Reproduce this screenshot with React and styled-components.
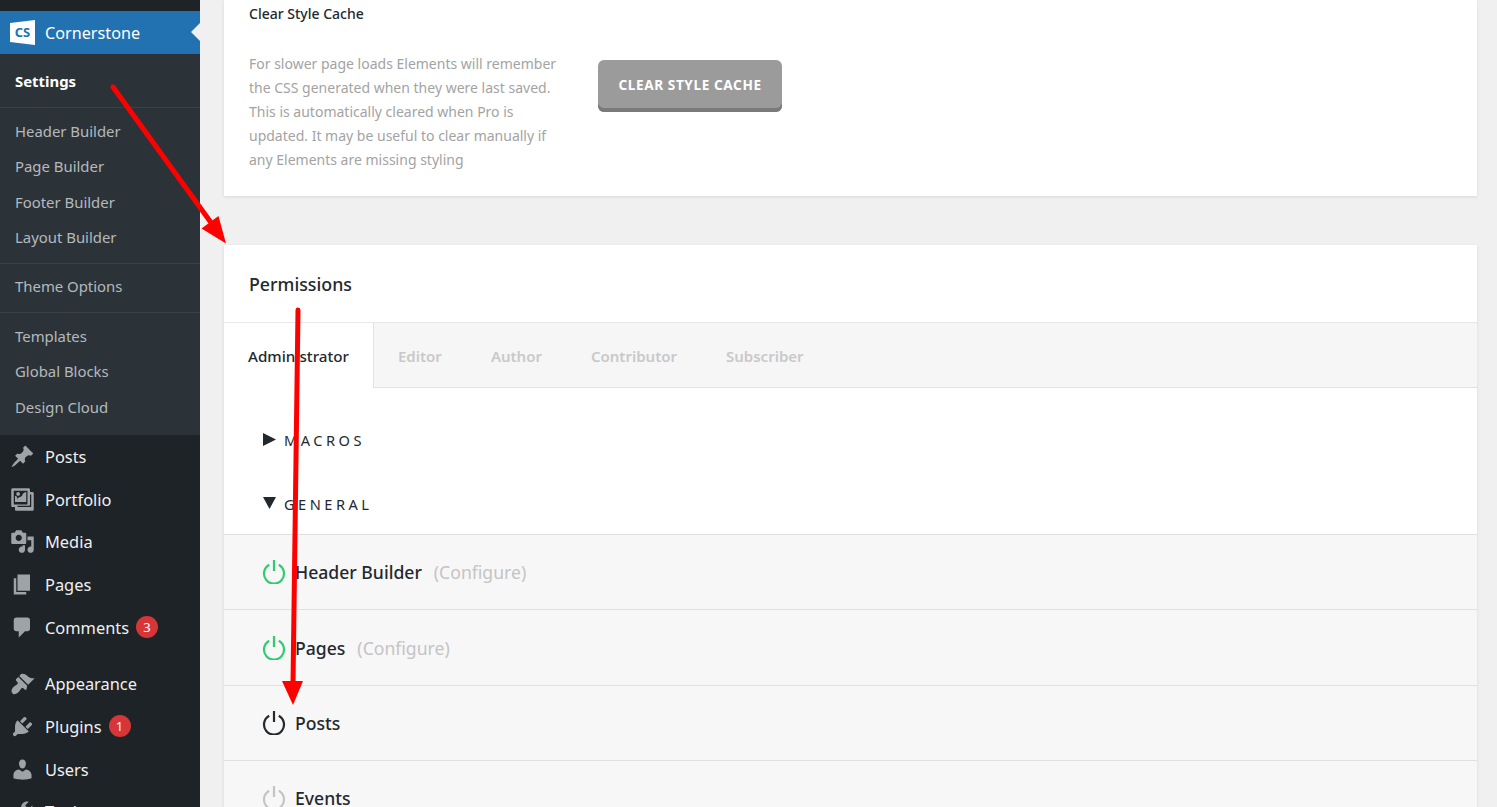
import React from "react";
import styled, { createGlobalStyle } from "styled-components";

const dashicons = {
  post: "M10.44 3.02l1.82-1.82 6.36 6.35-1.83 1.82c-1.05-.68-2.48-.57-3.41.36l-.75.75c-.92.93-1.04 2.35-.35 3.41l-1.83 1.82-2.41-2.41-2.8 2.79c-.42.42-3.38 2.71-3.8 2.29s1.86-3.39 2.28-3.81l2.79-2.79L4.1 9.36l1.83-1.82c1.05.69 2.48.57 3.4-.36l.75-.75c.93-.92 1.05-2.35.36-3.41z",
  gallery: "M16 4h1.96c.57 0 1.04.47 1.04 1.04v12.92c0 .57-.47 1.04-1.04 1.04H5.04C4.47 19 4 18.53 4 17.96V16H2.04C1.47 16 1 15.53 1 14.96V2.04C1 1.47 1.47 1 2.04 1h12.92c.57 0 1.04.47 1.04 1.04V4zM3 14h11V3H3v11zm5-8.5C8 4.67 7.33 4 6.5 4S5 4.67 5 5.5 5.67 7 6.5 7 8 6.33 8 5.5zm2 .5s1-2 3-2v8H4V7c2 0 2 3 2 3s.33-2 2-2 2-2 2-2zm7 7V6h-1v8c0 .55-.45 1-1 1H6v1h11z",
  media: "M13 11V4c0-.55-.45-1-1-1h-1.67L9 1H5L3.67 3H2c-.55 0-1 .45-1 1v7c0 .55.45 1 1 1h10c.55 0 1-.45 1-1zM7 4.5c1.38 0 2.5 1.12 2.5 2.5S8.38 9.5 7 9.5 4.5 8.38 4.5 7 5.62 4.5 7 4.5zM14 6h5v10.5c0 1.38-1.12 2.5-2.5 2.5S14 17.88 14 16.5s1.12-2.5 2.5-2.5c.17 0 .34.02.5.05V9h-3V6zm-4 8.05V13h2v3.5c0 1.38-1.12 2.5-2.5 2.5S7 17.88 7 16.5 8.12 14 9.5 14c.17 0 .34.02.5.05z",
  page: "M6 15V2h10v13H6zm-1 1h8v2H3V5h2v11z",
  comments: "M5 2h9c1.1 0 2 .9 2 2v7c0 1.1-.9 2-2 2h-2l-5 5v-5H5c-1.1 0-2-.9-2-2V4c0-1.1.9-2 2-2z",
  appearance: "M14.48 11.06L7.41 3.99l1.5-1.5c.5-.56 2.3-.47 3.51.32 1.21.8 1.43 1.28 2.91 2.1 1.18.64 2.45 1.26 4.45.85zm-.71.71L6.7 4.7 4.93 6.47c-.39.39-.39 1.02 0 1.41l1.06 1.06c.39.39.39 1.03 0 1.42-.6.6-1.43 1.11-2.21 1.69-.35.26-.7.53-1.01.84-1.34 1.34-1.78 3.19-1.47 3.9.2.46.46.85.77 1.16.24.24.5.43.77.55.71.31 2.56-.13 3.9-1.47.31-.31.58-.66.84-1.01.58-.78 1.09-1.61 1.69-2.21.39-.39 1.03-.39 1.42 0l1.06 1.06c.39.39 1.02.39 1.41 0z",
  plugins: "M13.11 4.36L9.87 7.6 8 5.73l3.24-3.24c.35-.34 1.05-.2 1.56.32.52.51.66 1.21.31 1.55zm-8 1.77l.91-1.12 9.01 9.01-1.19.84c-.71.71-2.63 1.16-3.82 1.16H6.14L4.9 17.26c-.59.59-1.54.59-2.12 0-.59-.58-.59-1.53 0-2.12l1.24-1.24v-3.88c0-1.13.4-3.19 1.09-3.89zm7.26 3.97l3.24-3.24c.34-.35 1.04-.21 1.55.31.52.51.66 1.21.31 1.55l-3.24 3.25z",
  users: "M10 9.25c-2.27 0-2.73-3.44-2.73-3.44C7 4.02 7.82 2 9.97 2c2.16 0 2.98 2.02 2.71 3.81 0 0-.41 3.44-2.68 3.44zm0 2.57L12.72 10c2.39 0 4.52 2.33 4.52 4.53v2.49s-3.65 1.13-7.24 1.13c-3.65 0-7.24-1.13-7.24-1.13v-2.49c0-2.25 1.94-4.48 4.47-4.48z",
  tools: "M16.68 9.77c-1.34 1.34-3.3 1.67-4.95.99l-5.41 6.52c-.99.99-2.59.99-3.58 0s-.99-2.59 0-3.58l6.52-5.41c-.68-1.65-.35-3.61.99-4.95 1.28-1.28 3.12-1.62 4.72-1.06l-2.89 2.89 2.82 2.82 2.86-2.87c.53 1.58.18 3.39-1.08 4.65zM3.81 16.21c.4.39 1.04.39 1.43 0 .4-.4.4-1.04 0-1.43-.39-.4-1.03-.4-1.43 0-.39.39-.39 1.03 0 1.43z",
};

const GlobalStyle = createGlobalStyle`
  html, body {
    margin: 0;
    height: 100%;
    overflow: hidden;
    background: #f0f0f0;
    font-family: "Noto Sans", "Open Sans", sans-serif;
  }
`;

const Page = styled.div`
  position: relative;
  display: flex;
  height: 807px;
  overflow: hidden;
`;

const Sidebar = styled.nav`
  flex: 0 0 200px;
  background: #1d2327;
  padding-top: 11px;
  overflow: hidden;
`;

const ActiveItem = styled.div`
  position: relative;
  display: flex;
  align-items: center;
  height: 43px;
  background: #2271b1;
  color: #fff;
  font-size: 16.2px;
  padding-left: 10px;
  &::after {
    content: "";
    position: absolute;
    right: 0;
    top: 12px;
    border: 9px solid transparent;
    border-right-color: #f0f0f0;
    border-left-width: 0;
  }
`;

const LogoBox = styled.svg`
  width: 25px;
  height: 25px;
  margin-right: 10px;
`;

const Submenu = styled.div`
  background: #2c3338;
  height: 381px;
`;

const SubGroup = styled.div`
  padding: ${({ $pad }) => $pad || "6px 0"};
  border-bottom: ${({ $last }) => ($last ? "none" : "1px solid #3a4046")};
`;

const SubLink = styled.div`
  height: ${({ $h }) => $h || 35.4}px;
  line-height: ${({ $lh, $h }) => $lh || $h || 35.4}px;
  padding-left: 15px;
  font-size: 14.9px;
  font-weight: ${({ $active }) => ($active ? 700 : 400)};
  color: ${({ $active }) => ($active ? "#fff" : "#b4b9be")};
`;

const MenuList = styled.div`
  margin-top: ${({ $top }) => $top || 0}px;
`;

const MenuItem = styled.div`
  display: flex;
  align-items: center;
  height: 42.7px;
  padding-left: 10px;
  color: #f0f0f1;
  font-size: 16.4px;
`;

const MenuIcon = styled.svg`
  flex: 0 0 25px;
  width: 25px;
  height: 25px;
  margin-right: 10px;
  fill: #9ea3a8;
`;

const Badge = styled.span`
  display: inline-block;
  width: 22px;
  height: 22px;
  line-height: 22px;
  margin-left: 7px;
  border-radius: 50%;
  background: #d63638;
  color: #fff;
  font-size: 13px;
  text-align: center;
`;

const Main = styled.main`
  flex: 1;
  min-width: 0;
  padding: 0 20px 0 24px;
`;

const Card = styled.section`
  background: #fff;
  box-shadow: 0 1px 3px rgba(0, 0, 0, 0.1);
  margin-bottom: 49px;
`;

const CacheBody = styled.div`
  height: 196px;
  padding: 4px 25px 0;
  box-sizing: border-box;
`;

const CacheTitle = styled.h4`
  margin: 0 0 28px;
  font-size: 14px;
  line-height: 20px;
  font-weight: 500;
  color: #23282d;
`;

const CacheRow = styled.div`
  display: flex;
  gap: 41px;
`;

const CacheText = styled.p`
  margin: 0;
  width: 308px;
  font-size: 14px;
  line-height: 24px;
  color: #a3a3a3;
`;

const CacheButton = styled.button`
  height: 52px;
  width: 184px;
  margin-top: 8px;
  border: 0;
  border-radius: 6px;
  background: #9b9b9b;
  box-shadow: inset 0 -4px 0 #7a7a7a;
  color: #fff;
  font-family: inherit;
  font-size: 13.6px;
  font-weight: 700;
  letter-spacing: 0.6px;
  padding: 0 0 3px;
`;

const CardHeader = styled.h3`
  margin: 0;
  height: 77px;
  line-height: 78px;
  padding-left: 25px;
  font-size: 17.8px;
  font-weight: 500;
  color: #23282d;
  border-bottom: 1px solid #e8e8e8;
`;

const TabBar = styled.div`
  display: flex;
  height: 65px;
  background: #f6f6f6;
  box-sizing: border-box;
  border-bottom: 1px solid #e2e2e2;
`;

const Tab = styled.div`
  box-sizing: border-box;
  height: ${({ $active }) => ($active ? "65px" : "64px")};
  line-height: 67px;
  padding: ${({ $active }) => ($active ? "0 23.5px 0 24px" : "0 24.5px")};
  font-size: ${({ $active }) => ($active ? "15.2px" : "15px")};
  font-weight: ${({ $active }) => ($active ? 500 : 600)};
  color: ${({ $active }) => ($active ? "#23282d" : "#c9c9c9")};
  background: ${({ $active }) => ($active ? "#fff" : "transparent")};
  border-right: ${({ $active }) => ($active ? "1px solid #e2e2e2" : "none")};
`;

const Groups = styled.div`
  padding: 20px 0 0 39px;
  height: 146px;
  box-sizing: border-box;
`;

const GroupTitle = styled.div`
  display: flex;
  align-items: center;
  height: 64px;
  font-size: 14.6px;
  font-weight: 400;
  letter-spacing: 3.5px;
  color: #23282d;
`;

const Caret = styled.svg`
  width: 13px;
  height: 13px;
  margin-right: 8px;
  margin-top: -1px;
  fill: #23282d;
`;

const Row = styled.div`
  display: flex;
  align-items: center;
  height: 75.4px;
  padding-left: 38px;
  box-sizing: border-box;
  background: #f7f7f7;
  border-top: 1px solid #e0e0e0;
  font-size: 17.6px;
  font-weight: 500;
  color: #23282d;
`;

const PowerIcon = styled.svg`
  width: 24px;
  height: 24px;
  margin-right: 9px;
  fill: none;
  stroke: ${({ $color }) => $color};
  stroke-width: 2.2;
  stroke-linecap: butt;
`;

const Configure = styled.span`
  margin-left: 12px;
  font-weight: 400;
  color: #c4c4c4;
`;

const Arrows = styled.svg`
  position: absolute;
  left: 0;
  top: 0;
  width: 1497px;
  height: 807px;
  pointer-events: none;
`;

const Icon = ({ d }) => (
  <MenuIcon viewBox="0 0 20 20">
    <path d={d} />
  </MenuIcon>
);

const Power = ({ color }) => (
  <PowerIcon viewBox="0 0 24 24" $color={color}>
    <path d="M7.2 4.8a10 10 0 1 0 9.6 0" />
    <path d="M12 0v11" />
  </PowerIcon>
);

const rows = [
  { name: "Header Builder", color: "#2ecc71", configure: true },
  { name: "Pages", color: "#2ecc71", configure: true },
  { name: "Posts", color: "#23282d" },
  { name: "Events", color: "#c4c4c4" },
];

export default function App() {
  return (
    <Page>
      <GlobalStyle />
      <Sidebar>
        <ActiveItem>
          <LogoBox viewBox="0 0 25 25">
            <path d="M0 3 L25 0 V25 L0 22 Z" fill="#fff" />
            <text x="12.5" y="17" textAnchor="middle" fontSize="13" fontWeight="700" fontFamily="Noto Sans" fill="#2271b1">
              CS
            </text>
          </LogoBox>
          Cornerstone
        </ActiveItem>
        <Submenu>
          <SubGroup $pad="0">
            <SubLink $active $h={53} $lh={55}>
              Settings
            </SubLink>
          </SubGroup>
          <SubGroup $pad="6px 0 7px">
            <SubLink>Header Builder</SubLink>
            <SubLink>Page Builder</SubLink>
            <SubLink>Footer Builder</SubLink>
            <SubLink>Layout Builder</SubLink>
          </SubGroup>
          <SubGroup $pad="5.5px 0 7.5px">
            <SubLink>Theme Options</SubLink>
          </SubGroup>
          <SubGroup $pad="6px 0" $last>
            <SubLink>Templates</SubLink>
            <SubLink>Global Blocks</SubLink>
            <SubLink>Design Cloud</SubLink>
          </SubGroup>
        </Submenu>
        <MenuList>
          <MenuItem><Icon d={dashicons.post} />Posts</MenuItem>
          <MenuItem><Icon d={dashicons.gallery} />Portfolio</MenuItem>
          <MenuItem><Icon d={dashicons.media} />Media</MenuItem>
          <MenuItem><Icon d={dashicons.page} />Pages</MenuItem>
          <MenuItem><Icon d={dashicons.comments} />Comments<Badge>3</Badge></MenuItem>
        </MenuList>
        <MenuList $top={14}>
          <MenuItem><Icon d={dashicons.appearance} />Appearance</MenuItem>
          <MenuItem><Icon d={dashicons.plugins} />Plugins<Badge>1</Badge></MenuItem>
          <MenuItem><Icon d={dashicons.users} />Users</MenuItem>
          <MenuItem><Icon d={dashicons.tools} />Tools</MenuItem>
        </MenuList>
      </Sidebar>
      <Main>
        <Card>
          <CacheBody>
            <CacheTitle>Clear Style Cache</CacheTitle>
            <CacheRow>
              <CacheText>
                For slower page loads Elements will remember the CSS generated when they were last saved. This is
                automatically cleared when Pro is updated. It may be useful to clear manually if any Elements are
                missing styling
              </CacheText>
              <CacheButton>CLEAR STYLE CACHE</CacheButton>
            </CacheRow>
          </CacheBody>
        </Card>
        <Card>
          <CardHeader>Permissions</CardHeader>
          <TabBar>
            <Tab $active>Administrator</Tab>
            <Tab>Editor</Tab>
            <Tab>Author</Tab>
            <Tab>Contributor</Tab>
            <Tab>Subscriber</Tab>
          </TabBar>
          <Groups>
            <GroupTitle>
              <Caret viewBox="0 0 13 13"><path d="M0 0 L13 6.5 L0 13 Z" /></Caret>
              MACROS
            </GroupTitle>
            <GroupTitle>
              <Caret viewBox="0 0 13 13"><path d="M0 0 H13 L6.5 12 Z" /></Caret>
              GENERAL
            </GroupTitle>
          </Groups>
          {rows.map((row) => (
            <Row key={row.name}>
              <Power color={row.color} />
              {row.name}
              {row.configure && <Configure>(Configure)</Configure>}
            </Row>
          ))}
        </Card>
      </Main>
      <Arrows viewBox="0 0 1497 807">
        <path d="M113 87 L212 224" stroke="#f00" strokeWidth="5" strokeLinecap="round" />
        <path d="M226 243.5 L201.5 228.5 L218.5 216 Z" fill="#f00" />
        <path d="M298 310 L293 684" stroke="#f00" strokeWidth="5" strokeLinecap="round" />
        <path d="M293 705 L282 681 L303 681 Z" fill="#f00" />
      </Arrows>
    </Page>
  );
}
